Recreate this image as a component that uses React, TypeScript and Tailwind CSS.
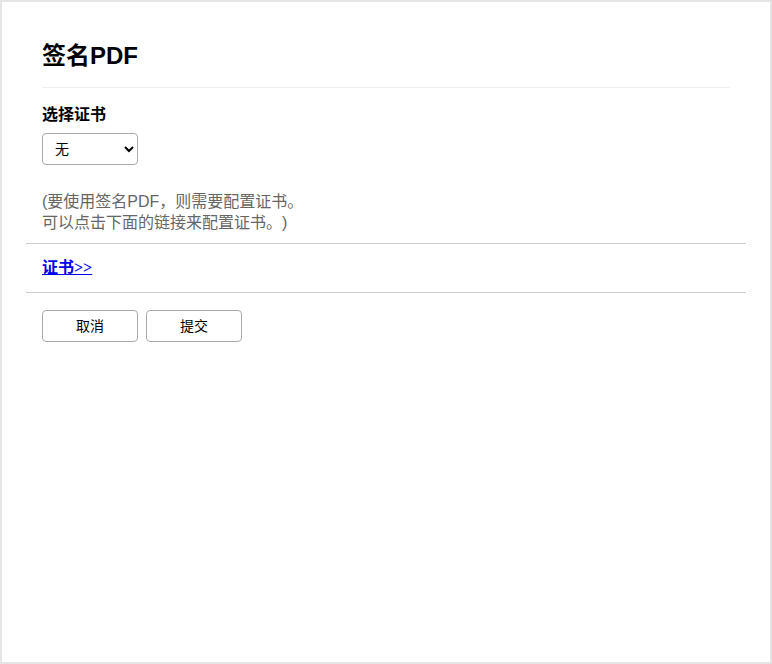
import { useState } from "react";

export default function App() {
  const [cert, setCert] = useState("none");

  return (
    <div className="h-[664px] w-[772px] border-2 border-[#e5e5e5] bg-white font-['Liberation_Sans','Noto_Sans_CJK_SC',sans-serif] text-black [text-spacing-trim:space-all]">
      <div className="px-6">
        {/* Header */}
        <div className="mx-4 border-b border-[#eeeeee] pt-[38px] pb-[15px]">
          <h1 className="text-[24px] leading-[32px] font-bold">签名PDF</h1>
        </div>

        {/* Certificate select */}
        <div className="border-b border-[#cdcdcd] px-4 pt-[15px] pb-[10px]">
          <div className="text-[16px] leading-[24px] font-bold">选择证书</div>
          <select
            value={cert}
            onChange={(e) => setCert(e.target.value)}
            className="mt-[6px] h-[32px] w-[96px] rounded-[4px] border border-[#aaaaaa] bg-white pl-[8px] pr-[6px] text-[14px] text-black"
          >
            <option value="none">无</option>
          </select>
          <p className="mt-[26px] text-[16px] leading-[21px] text-[#666666]">
            (要使用签名PDF，则需要配置证书。
            <br />
            可以点击下面的链接来配置证书。)
          </p>
        </div>

        {/* Link */}
        <div className="border-b border-[#cdcdcd] px-4 py-3">
          <a
            href="#"
            className="font-['Liberation_Serif','Noto_Sans_CJK_SC',serif] text-[16px] leading-[24px] font-bold text-[#0000ee] underline"
          >
            证书&gt;&gt;
          </a>
        </div>

        {/* Buttons */}
        <div className="flex gap-2 px-4 pt-[17px]">
          <button className="h-[32px] w-[96px] rounded-[4px] border border-[#aaaaaa] bg-white text-[14px] text-black">
            取消
          </button>
          <button className="h-[32px] w-[96px] rounded-[4px] border border-[#aaaaaa] bg-white text-[14px] text-black">
            提交
          </button>
        </div>
      </div>
    </div>
  );
}
